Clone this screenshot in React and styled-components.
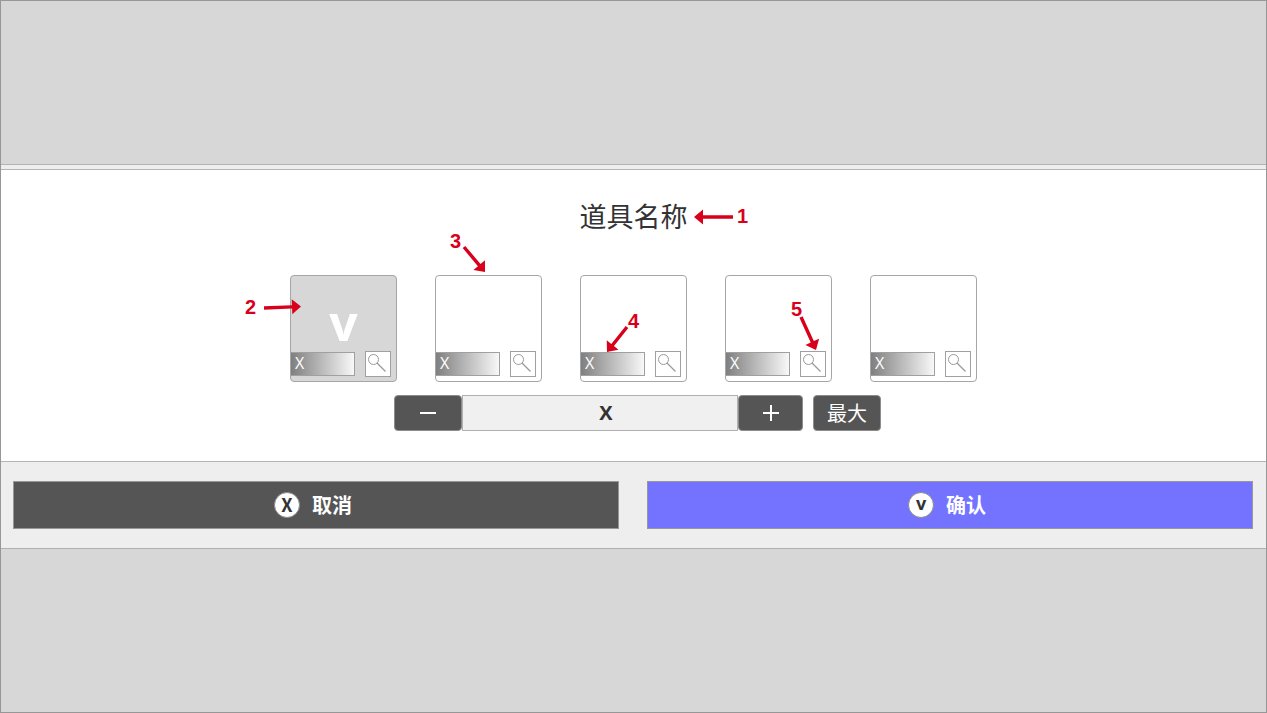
import React, { useState } from 'react'
import { createGlobalStyle, styled } from 'styled-components'

const GlobalStyle = createGlobalStyle`
  * {
    box-sizing: border-box;
  }
  body {
    margin: 0;
    color: #333;
    font-family: "Noto Sans CJK SC", sans-serif;
  }
  button, input {
    margin: 0;
    padding: 0;
    color: inherit;
    font-family: inherit;
  }
  button {
    cursor: pointer;
  }
`
const Page = styled.div`
  min-height: 100vh;
  display: flex;
  flex-direction: column;
  justify-content: center;
  border: 1px solid #979797;
  background-color: #d7d7d7;
`
const Dialog = styled.section`
  border-top: 1px solid #b4b4b4;
  border-bottom: 1px solid #b0b0b0;
  background-color: #eee;
`
const Body = styled.div`
  margin-top: 4px;
  padding: 28px 16px 30px;
  display: flex;
  flex-direction: column;
  align-items: center;
  border-top: 1px solid #b4b4b4;
  border-bottom: 1px solid #b4b4b4;
  background-color: white;
`
const Title = styled.h1`
  position: relative;
  margin: 0 0 41px;
  font-size: 27px;
  line-height: 36px;
  font-weight: 400;
`
const Items = styled.div`
  display: flex;
  gap: 38px;
`
const Card = styled.div`
  position: relative;
  width: 107px;
  height: 107px;
  display: flex;
  flex-direction: column;
  border: 1px solid #a6a6a6;
  border-radius: 4px;
  background-color: ${(props) => (props.$selected ? '#d7d7d7' : 'white')};
`
const Face = styled.button`
  flex: 1;
  min-height: 0;
  padding-top: 16px;
  border: none;
  background: none;
  color: white;
  font-size: 50px;
  line-height: 50px;
  font-weight: 700;
  font-family: "Open Sans", sans-serif;
`
const CardFoot = styled.div`
  display: flex;
  align-items: center;
  gap: 10px;
  padding-bottom: 4px;
`
const Count = styled.span`
  width: 64px;
  height: 24px;
  padding-left: 4px;
  border: 1px solid #a0a0a0;
  border-left: none;
  background-image: linear-gradient(to right, #7f7f7f, #f8f8f8);
  color: white;
  font-size: 16px;
  line-height: 20px;
  font-family: "Open Sans", sans-serif;
`
const Inspect = styled.button`
  width: 26px;
  height: 26px;
  display: flex;
  border: 1px solid #a0a0a0;
  background-color: white;
`
const Stepper = styled.div`
  display: flex;
  margin-top: 13px;
  padding-left: 8px;
`
const DarkButton = styled.button`
  width: ${(props) => props.$width || 68}px;
  height: 36px;
  margin-left: ${(props) => (props.$apart ? 10 : 0)}px;
  padding-bottom: ${(props) => (props.$apart ? 2 : 0)}px;
  display: flex;
  align-items: center;
  justify-content: center;
  border: 1px solid #8c8c8c;
  border-radius: 4px;
  background-color: #555;
  color: white;
  font-size: 20px;
`
const Amount = styled.input`
  width: 276px;
  height: 36px;
  padding: 0 0 2px 12px;
  border: 1px solid #b0b0b0;
  border-radius: 0;
  background-color: #f0f0f0;
  font-size: 20px;
  font-weight: 700;
  font-family: "Open Sans", sans-serif;
  text-align: center;
`
const Actions = styled.div`
  display: flex;
  gap: 28px;
  padding: 19px 13px 19px 12px;
`
const ActionButton = styled.button`
  flex: 1;
  height: 48px;
  padding: 0 6px 0 0;
  display: flex;
  align-items: center;
  justify-content: center;
  gap: 12px;
  border: 1px solid #979797;
  background-color: ${(props) => (props.$primary ? '#7373ff' : '#555')};
  color: white;
  font-size: 20px;
  line-height: 30px;
  font-weight: 700;
`
const ActionLabel = styled.span`
  padding-bottom: 1px;
`
const KeyCap = styled.span`
  width: 26px;
  height: 26px;
  border: 1px solid #8c8c8c;
  border-radius: 50%;
  background-color: white;
  color: #333;
  font-size: 18px;
  line-height: ${(props) => (props.$low ? 20 : 22)}px;
  font-family: ${(props) => (props.$low ? '"Open Sans", sans-serif' : 'inherit')};
`
const NoteLayer = styled.svg`
  position: absolute;
  top: 0;
  left: 0;
  width: 107px;
  height: 107px;
  overflow: visible;
  pointer-events: none;
  fill: #d9001b;
  stroke: none;
  font: 700 20px "Liberation Sans", sans-serif;
`

// number plus an arrow running from (x1, y1) to its tip at (x2, y2)
const Note = ({ label, x, y, x1, y1, x2, y2 }) => {
  const length = Math.hypot(x2 - x1, y2 - y1)
  const angle = (Math.atan2(y2 - y1, x2 - x1) * 180) / Math.PI
  return (
    <NoteLayer>
      <text x={x} y={y}>{label}</text>
      <g transform={`translate(${x1} ${y1}) rotate(${angle})`}>
        <path d={`M0 -1.7H${length - 9}V-7.5L${length} 0L${length - 9} 7.5V1.7H0Z`} />
      </g>
    </NoteLayer>
  )
}

const Magnifier = () => (
  <svg width="24" height="24" viewBox="0 0 24 24" fill="none" stroke="#999" strokeWidth="1">
    <circle cx="7.5" cy="7.5" r="5" />
    <path d="M11 11L19.5 19.5" strokeWidth="1.2" />
  </svg>
)

const notes = {
  0: { label: '2', x: -46, y: 38, x1: -27, y1: 32, x2: 10, y2: 30.5 },
  1: { label: '3', x: 14, y: -28, x1: 28, y1: -29, x2: 49, y2: -4 },
  2: { label: '4', x: 47, y: 52, x1: 46, y1: 51, x2: 26, y2: 76 },
  3: { label: '5', x: 65, y: 40, x1: 75, y1: 41, x2: 90, y2: 74 },
}

const App = () => {
  const [selected, setSelected] = useState(0)
  const [amount, setAmount] = useState('X')

  return (
    <Page>
      <GlobalStyle />
      <Dialog>
        <Body>
          <Title>
            道具名称
            <Note label="1" x={157} y={25} x1={153} y1={19} x2={114} y2={19} />
          </Title>
          <Items>
            {[0, 1, 2, 3, 4].map((id) => (
              <Card key={id} $selected={selected === id}>
                <Face
                  aria-label={`道具 ${id + 1}`}
                  aria-pressed={selected === id}
                  onClick={() => setSelected(id)}
                >
                  {selected === id && 'v'}
                </Face>
                <CardFoot>
                  <Count>X</Count>
                  <Inspect aria-label="查看">
                    <Magnifier />
                  </Inspect>
                </CardFoot>
                {notes[id] && <Note {...notes[id]} />}
              </Card>
            ))}
          </Items>
          <Stepper>
            <DarkButton aria-label="减少">
              <svg width="18" height="18" stroke="white" strokeWidth="2">
                <path d="M1 9H17" />
              </svg>
            </DarkButton>
            <Amount
              aria-label="数量"
              value={amount}
              onChange={(e) => setAmount(e.target.value)}
            />
            <DarkButton aria-label="增加" $width={65}>
              <svg width="18" height="18" stroke="white" strokeWidth="2">
                <path d="M1 9H17M9 1V17" />
              </svg>
            </DarkButton>
            <DarkButton $apart>最大</DarkButton>
          </Stepper>
        </Body>
        <Actions>
          <ActionButton>
            <KeyCap>X</KeyCap>
            <ActionLabel>取消</ActionLabel>
          </ActionButton>
          <ActionButton $primary>
            <KeyCap $low>v</KeyCap>
            <ActionLabel>确认</ActionLabel>
          </ActionButton>
        </Actions>
      </Dialog>
    </Page>
  )
}

export default App
